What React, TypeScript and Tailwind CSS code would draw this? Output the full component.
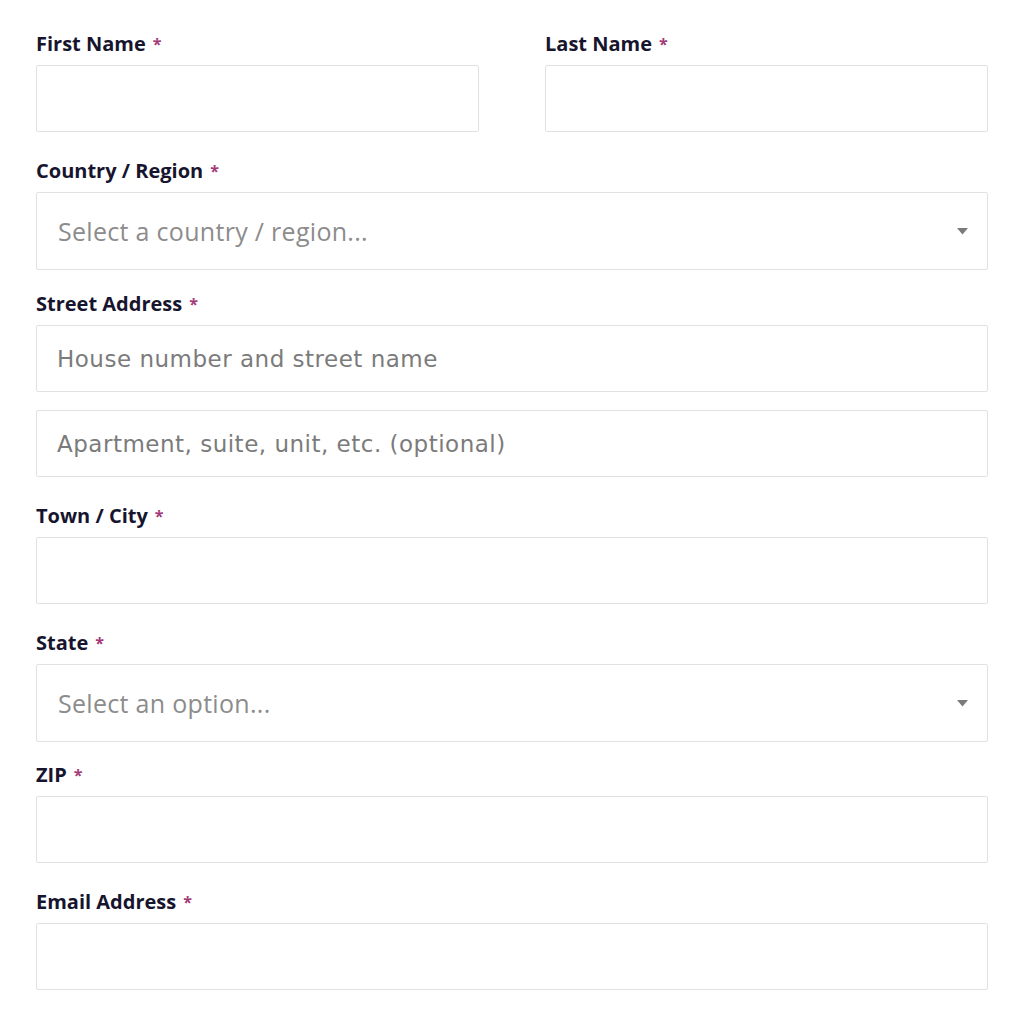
import type { ReactNode } from 'react'

function Label({ children }: { children: ReactNode }) {
  return (
    <label className="block text-[20px] leading-[22px] font-bold text-[#17152e] mb-[10px] font-['Open_Sans',sans-serif]">
      {children}
      <span className="ml-[7px] text-[#a33a78] text-[16px] align-top">*</span>
    </label>
  )
}

function TextBox({ placeholder }: { placeholder?: string }) {
  return (
    <input
      placeholder={placeholder}
      className="block w-full h-[67px] border border-[#e1e1e1] rounded-[2px] px-5 text-[23px] tracking-[0.5px] font-['DejaVu_Sans',sans-serif] text-[#333] placeholder:text-[#7b7b7b] outline-none bg-white"
    />
  )
}

function SelectBox({ placeholder }: { placeholder: string }) {
  return (
    <div className="flex items-center justify-between h-[78px] border border-[#e1e1e1] rounded-[2px] pl-[21px] pr-[19px] bg-white">
      <span className="mt-[2px] text-[25px] text-[#8c8c8c] font-['Open_Sans',sans-serif] tracking-[0.3px]">{placeholder}</span>
      <svg width="11" height="7" viewBox="0 0 11 7">
        <path d="M0 0 L11 0 L5.5 6.5 Z" fill="#7a7a7a" />
      </svg>
    </div>
  )
}

export default function App() {
  return (
    <div className="bg-white min-h-screen px-9 pt-[33px] pb-6">
      <div className="grid grid-cols-2 gap-x-[66px] mb-[28px]">
        <div>
          <Label>First Name</Label>
          <TextBox />
        </div>
        <div>
          <Label>Last Name</Label>
          <TextBox />
        </div>
      </div>

      <div className="mb-[23px]">
        <Label>Country / Region</Label>
        <SelectBox placeholder="Select a country / region..." />
      </div>

      <div className="mb-[28px]">
        <Label>Street Address</Label>
        <TextBox placeholder="House number and street name" />
        <div className="h-[18px]" />
        <TextBox placeholder="Apartment, suite, unit, etc. (optional)" />
      </div>

      <div className="mb-[28px]">
        <Label>Town / City</Label>
        <TextBox />
      </div>

      <div className="mb-[22px]">
        <Label>State</Label>
        <SelectBox placeholder="Select an option..." />
      </div>

      <div className="mb-[28px]">
        <Label>ZIP</Label>
        <TextBox />
      </div>

      <div>
        <Label>Email Address</Label>
        <TextBox />
      </div>
    </div>
  )
}
